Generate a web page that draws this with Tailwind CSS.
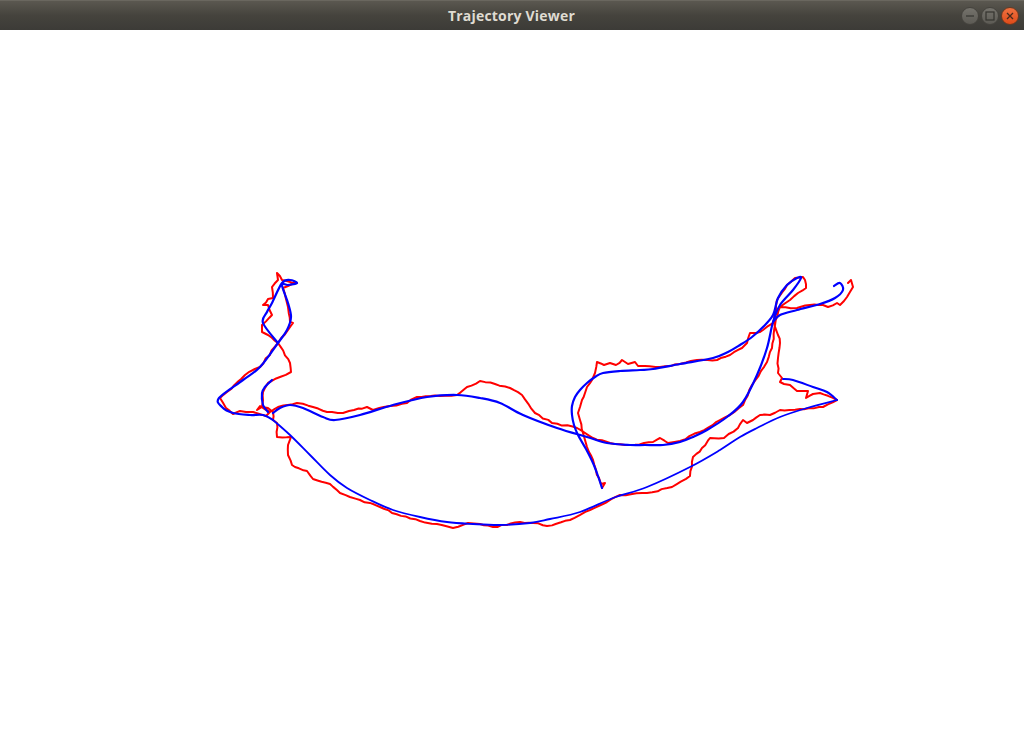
<!DOCTYPE html>
<html lang="en">
<head>
  <meta charset="UTF-8" />
  <title>Trajectory Viewer</title>
  <script src="https://cdn.jsdelivr.net/npm/@tailwindcss/browser@4"></script>
</head>
<body class="bg-white h-[741px] w-[1024px] overflow-hidden flex flex-col">

  <!-- Title bar -->
  <header class="h-[30px] shrink-0 flex items-center bg-gradient-to-b from-[#5b5850] via-[#45433d] to-[#3c3b37] border-t border-[#6a675f]">
    <div class="flex-1"></div>
    <div class="ml-[4px] text-[14px] font-bold text-[#dfdbd2] font-['Open_Sans','DejaVu_Sans',sans-serif] tracking-[0.2px]">Trajectory Viewer</div>
    <div class="flex-1 flex items-center justify-end gap-[2px] pr-[5px]">
      <button class="w-[18px] h-[18px] rounded-full bg-gradient-to-b from-[#75736c] to-[#5c5a54] border border-[#45433e] flex items-center justify-center">
        <svg width="10" height="10" viewBox="0 0 10 10"><path d="M1 5H9" stroke="#35342f" stroke-width="1.2" /></svg>
      </button>
      <button class="w-[18px] h-[18px] rounded-full bg-gradient-to-b from-[#75736c] to-[#5c5a54] border border-[#45433e] flex items-center justify-center">
        <svg width="10" height="10" viewBox="0 0 10 10"><rect x="1" y="1" width="8" height="8" fill="none" stroke="#35342f" stroke-width="1.2" /></svg>
      </button>
      <button class="w-[18px] h-[18px] rounded-full bg-gradient-to-b from-[#f0713f] to-[#de4a17] border border-[#6b3a22] flex items-center justify-center">
        <svg width="10" height="10" viewBox="0 0 10 10"><path d="M2 2L8 8M8 2L2 8" stroke="#4a2a1c" stroke-width="1.3" /></svg>
      </button>
    </div>
  </header>

  <!-- Trajectories, coordinates are window pixels -->
  <main class="flex-1">
    <svg width="1024" height="711" viewBox="0 30 1024 711" fill="none" stroke-linejoin="round" stroke-linecap="round" class="block">
      <!-- measured -->
      <path class="measured" stroke="#ff0000" stroke-width="2" d="M602 488L605 483L601 484L599 478L596 470L593 460L589 452L587 447L585 440L583 433L580 420L578 413L580 407L582 400L585 393L587 387L592 380L595 373L597 362L604 365L610 363L616 365L622 360L628 364L635 362L638 366L645 366L660 367L680 364L697 360L717 360L730 355L742 348L747 343L750 333L756 333L763 330L773 323L777 311L780 307L790 300L798 293L806 288L805 280L803 277L795 278L787 285L777 300L774 322L778 335L780 343L778 358L778 373L782 378L780 382L784 384L790 385L797 391L803 391L808 391L806 398L813 394L820 393L837 400L823 407L800 409L780 410L770 415L760 415L753 420L747 423L743 420L738 428L724 438L710 438L702 448L693 457L690 476L672 487L647 493L620 495L607 502L590 510L570 520L547 526L533 523L520 522L507 525L493 527L480 524L468 523L453 528L437 524L420 521L392 513L380 507L360 500L340 493L330 484L313 479L307 471L295 467L292 465L288 455L288 445L291 437L277 437L277 423L273 420L273 412L268 408L262 407L257 410L260 406L270 412L266 416L253 412L246 412L240 411L233 414L226 408L220 398L227 392L245 375L260 367L278 343L290 363L291 372L280 377L268 383L263 392L263 400L262 407L270 412L278 407L297 403L313 407L327 412L332 412L343 413L354 410L367 407L373 410L390 406L407 403L417 397L440 396L457 395L467 387L480 381L495 384L510 388L522 395L535 413L552 423L577 428L593 438L610 443L630 445L653 442L660 438L668 443L680 441L700 432L720 420L730 415L743 405L752 385L767 362L772 348L775 325L780 307L797 308L810 305L823 305L828 307L837 303L840 305L847 297L853 287L851 280L848 283" />
      <path class="measured" stroke="#ff0000" stroke-width="2" d="M278 343L268 335L262 332L262 325L272 315L268 305L263 305L268 299L273 298L272 287L278 280L277 273L282 280L297 283L288 286L283 288L287 303L290 322L293 323L288 330L278 343" />

      <!-- filtered -->
      <path class="filtered" stroke="#0000ff" stroke-width="2.2" d="M602 488L598 476L593 463L586 449L578 435L574 425L572 415L572 406L575 397L580 390L587 383L595 377L603 373L620 371L640 370L653 369L680 364L713 358L728 352L740 345L752 337L763 327L773 315L778 298L787 285L797 278L801 278L793 290L780 305L773 322L767 348L757 375L743 402L727 417L707 430L693 437L680 442L663 445L645 445L630 445L607 443L587 437L557 428L523 415L500 403L480 398L457 395L427 397L393 405L360 415L335 420L323 417L303 408L290 405L280 408L273 413" />
      <path class="filtered" stroke="#0000ff" stroke-width="2.2" d="M268 412L263 405L262 393L265 387L272 380" />
      <path class="filtered" stroke="#0000ff" stroke-width="2.2" d="M278 343L263 323L267 312L272 303L282 283L290 280L297 283L288 285L282 285L288 303L291 317L287 330L278 343L260 367L243 380L219 398L222 407L233 413L250 415L263 415L273 420" />
      <path class="filtered" stroke="#0000ff" stroke-width="1.8" d="M273 420L290 435L310 455L330 475L347 488L370 500L393 510L420 517L447 522L473 524L500 525L530 523L550 519L580 512L613 498L647 487L690 467L720 450L740 437L757 428L780 417L807 408L837 400" />
      <path class="filtered" stroke="#0000ff" stroke-width="2" d="M837 400L827 392L813 387L793 380L783 379" />
      <path class="filtered" stroke="#0000ff" stroke-width="2.2" d="M773 322L780 315L797 310L820 304L835 298L843 290L840 283L834 286" />
    </svg>
  </main>

  <script>
    function readPoints(path) {
      return path.getAttribute("d").slice(1).split("L").map((p) => p.split(" ").map(Number));
    }

    // Filtered track: Catmull-Rom through the points
    document.querySelectorAll(".filtered").forEach((path) => {
      const pts = readPoints(path);
      let d = `M${pts[0][0]} ${pts[0][1]}`;
      for (let i = 0; i < pts.length - 1; i++) {
        const p0 = pts[i - 1] || pts[i];
        const p1 = pts[i];
        const p2 = pts[i + 1];
        const p3 = pts[i + 2] || p2;
        const c1x = p1[0] + (p2[0] - p0[0]) / 6;
        const c1y = p1[1] + (p2[1] - p0[1]) / 6;
        const c2x = p2[0] - (p3[0] - p1[0]) / 6;
        const c2y = p2[1] - (p3[1] - p1[1]) / 6;
        d += `C${c1x} ${c1y} ${c2x} ${c2y} ${p2[0]} ${p2[1]}`;
      }
      path.setAttribute("d", d);
    });

    // Measured track: split long segments and add a little fixed noise
    let seed = 7;
    function noise() {
      seed = (seed * 16807) % 2147483647;
      return (seed / 2147483647 - 0.5) * 1.4;
    }
    document.querySelectorAll(".measured").forEach((path) => {
      const pts = readPoints(path);
      let d = `M${pts[0][0]} ${pts[0][1]}`;
      for (let i = 0; i < pts.length - 1; i++) {
        const [x1, y1] = pts[i];
        const [x2, y2] = pts[i + 1];
        const steps = Math.max(1, Math.round(Math.hypot(x2 - x1, y2 - y1) / 5));
        for (let s = 1; s < steps; s++) {
          d += `L${x1 + ((x2 - x1) * s) / steps + noise()} ${y1 + ((y2 - y1) * s) / steps + noise()}`;
        }
        d += `L${x2} ${y2}`;
      }
      path.setAttribute("d", d);
    });
  </script>

</body>
</html>
